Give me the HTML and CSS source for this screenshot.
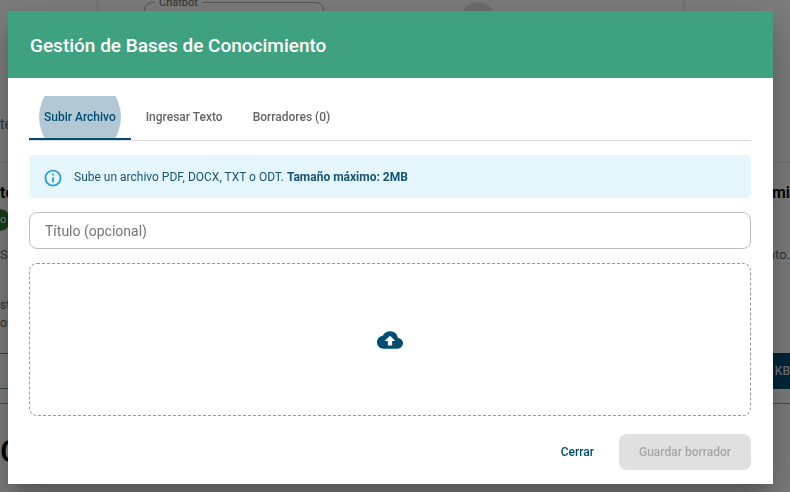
FILE: index.html
```
<!DOCTYPE html>
<html lang="es">
<head>
    <meta charset="UTF-8">
    <meta name="viewport" content="width=device-width, initial-scale=1">
    <title>Gestión de Bases de Conocimiento</title>
    <link rel="stylesheet" href="styles.css">
</head>
<body>

    <!-- Página de fondo -->
    <div class="page" aria-hidden="true">
        <div class="topCard">
            <fieldset class="chatSelect"><legend>Chatbot</legend></fieldset>
            <div class="avatar"></div>
        </div>
        <div class="pageRow intro"><span>te</span></div>
        <div class="pageCard">
            <div class="pageRow heading"><b>te</b><b>mi</b></div>
            <div class="pageRow chipRow"><span class="chip">o</span></div>
            <div class="pageRow detail"><span>S</span><span>nto.</span></div>
            <div class="pageRow note"><span>st<br>os</span></div>
            <div class="pageRow actions">
                <div class="pageField"></div>
                <div class="kbButton">KB</div>
            </div>
        </div>
        <div class="bigTitle">C</div>
    </div>

    <!-- Ventana modal -->
    <div class="backdrop">
        <div class="dialog" role="dialog" aria-labelledby="dialogTitle">
            <h2 class="dialogTitle" id="dialogTitle">Gestión de Bases de Conocimiento</h2>
            <div class="dialogContent">
                <div class="tabs" role="tablist">
                    <button class="tab active" role="tab" aria-selected="true"><span>Subir Archivo</span></button>
                    <button class="tab" role="tab" aria-selected="false"><span>Ingresar Texto</span></button>
                    <button class="tab" role="tab" aria-selected="false"><span>Borradores (0)</span></button>
                </div>

                <div class="alert">
                    <svg class="infoIcon" viewBox="0 0 24 24"><path d="M11 7h2v2h-2zm0 4h2v6h-2zm1-9C6.48 2 2 6.48 2 12s4.48 10 10 10 10-4.48 10-10S17.52 2 12 2zm0 18c-4.41 0-8-3.59-8-8s3.59-8 8-8 8 3.59 8 8-3.59 8-8 8z"/></svg>
                    <span>Sube un archivo PDF, DOCX, TXT o ODT. <strong>Tamaño máximo: 2MB</strong></span>
                </div>

                <input class="titleInput" type="text" placeholder="Título (opcional)" aria-label="Título (opcional)">

                <button class="dropzone" aria-label="Subir archivo">
                    <svg class="cloudIcon" viewBox="0 0 24 24"><path d="M19.35 10.04C18.67 6.59 15.64 4 12 4 9.11 4 6.6 5.64 5.35 8.04 2.34 8.36 0 10.91 0 14c0 3.31 2.69 6 6 6h13c2.76 0 5-2.24 5-5 0-2.64-2.05-4.78-4.65-4.96zM14 13v4h-4v-4H7l5-5 5 5h-3z"/></svg>
                </button>
            </div>
            <div class="dialogActions">
                <button class="btnClose">Cerrar</button>
                <button class="btnSave" disabled>Guardar borrador</button>
            </div>
        </div>
    </div>

</body>
</html>
```
FILE: styles.css
```
* {
    box-sizing: border-box;
}

body {
    margin: 0;
    height: 100vh;
    overflow: hidden;
    background: #fafafa;
    font-family: Roboto, "Liberation Sans", sans-serif;
    font-size: 12px;
    color: #666;
}

button, input {
    font-family: inherit;
}

/* fondo */
.page {
    height: 100vh;
    overflow: hidden;
}

.topCard {
    display: flex;
    justify-content: space-between;
    width: 74%;
    height: 90px;
    margin: -20px 0 0 98px;
    padding: 16px 188px 0 46px;
    border-radius: 0 0 12px 12px;
    box-shadow: 0 0 4px rgba(0,0,0,.2);
}

.chatSelect {
    width: 180px;
    height: 40px;
    margin: 0;
    padding: 0 10px;
    border: 1px solid #aaa;
    border-radius: 8px;
}

.chatSelect legend {
    padding: 0 4px;
    font-size: 11px;
}

.avatar {
    width: 34px;
    height: 34px;
    margin-top: 6px;
    border-radius: 50%;
    background: #ddd;
}

.pageRow {
    display: flex;
    justify-content: space-between;
}

.intro {
    padding-top: 46px;
    height: 92px;
    font-size: 14px;
}

.pageCard {
    height: 242px;
    padding-top: 20px;
    border-top: 1px solid #e4e4e4;
    border-bottom: 1px solid #999;
}

.heading {
    height: 26px;
    font-size: 16px;
    color: #111;
}

.chip {
    width: 10px;
    height: 22px;
    line-height: 22px;
    border-radius: 0 11px 11px 0;
    background: #2e7d32;
    color: #fff;
    font-size: 11px;
}

.detail {
    margin-top: 16px;
    font-size: 13px;
}

.note {
    margin-top: 34px;
    line-height: 18px;
}

.actions {
    margin-top: 21px;
}

.pageField {
    flex: 1;
    height: 36px;
    border: 1px solid #5d8799;
    border-width: 1px 0;
}

.kbButton {
    width: 100px;
    height: 36px;
    line-height: 36px;
    background: #004d73;
    color: #ddd;
    text-align: right;
    font-weight: 500;
}

.bigTitle {
    margin-top: 28px;
    font-size: 32px;
    font-weight: 500;
    color: #000;
}

/* modal */
.backdrop {
    position: fixed;
    inset: 0;
    display: flex;
    padding: 11px 17px 8px 8px;
    background: rgba(0,0,0,.5);
}

.dialog {
    flex: 1;
    display: flex;
    flex-direction: column;
    background: #fff;
    box-shadow: 0 11px 15px -7px rgba(0,0,0,.2), 0 24px 38px 3px rgba(0,0,0,.14), 0 9px 46px 8px rgba(0,0,0,.12);
}

.dialogTitle {
    margin: 0;
    padding: 20px 22px 18px;
    background: #3ea280;
    color: #fff;
    font-size: 19px;
    font-weight: 500;
    line-height: 29px;
}

.dialogContent {
    flex: 1;
    display: flex;
    flex-direction: column;
    gap: 14px;
    padding: 18px 22px 0 21px;
}

.tabs {
    display: flex;
    border-bottom: 1px solid #ddd;
}

.tab {
    position: relative;
    overflow: hidden;
    height: 44px;
    padding: 0 15px;
    border: 0;
    border-bottom: 2px solid transparent;
    background: none;
    color: #666;
    font-size: 12px;
    font-weight: 500;
    cursor: pointer;
}

.tab span {
    position: relative;
}

.active {
    color: #004d73;
    border-bottom-color: #004d73;
}

.active::before {
    content: "";
    position: absolute;
    top: 50%;
    left: 50%;
    width: 82px;
    height: 82px;
    border-radius: 50%;
    background: #b2c8d4;
    transform: translate(-50%, -50%);
}

.alert {
    display: flex;
    align-items: center;
    gap: 11px;
    padding: 12px 14px 10px;
    border-radius: 4px;
    background: #e5f6fd;
    color: #155474;
    font-size: 12px;
    line-height: 21px;
}

.infoIcon {
    width: 20px;
    height: 20px;
    fill: #1598dc;
}

.titleInput {
    height: 37px;
    padding: 0 15px;
    border: 1px solid #bdbdbd;
    border-radius: 8px;
    font-size: 14px;
}

.titleInput::placeholder {
    color: #757575;
}

.dropzone {
    flex: 1;
    display: flex;
    align-items: center;
    justify-content: center;
    border: 1px dashed #999;
    border-radius: 8px;
    background: none;
    cursor: pointer;
}

.cloudIcon {
    width: 26px;
    height: 26px;
    fill: #004d73;
}

.dialogActions {
    display: flex;
    justify-content: flex-end;
    gap: 7px;
    padding: 18px 22px 14px;
}

.btnClose, .btnSave {
    height: 36px;
    padding: 0 18px;
    border: 0;
    border-radius: 8px;
    background: none;
    color: #004d73;
    font-size: 12px;
    font-weight: 500;
}

.btnSave {
    padding: 0 20px;
    background: #e0e0e0;
    color: #a6a6a6;
}
```
